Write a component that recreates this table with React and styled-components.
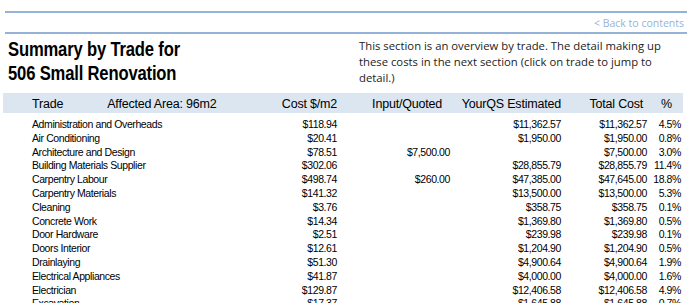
import React from "react"
import styled, { createGlobalStyle } from "styled-components"

const Global = createGlobalStyle`
  body {
    margin: 0;
    background: #fff;
    font-family: "Liberation Sans", Arial, sans-serif;
    color: #000;
  }
`

const Page = styled.div`
  width: 698px;
  height: 303px;
  overflow: hidden;
  padding-top: 11px;
  box-sizing: border-box;
`

const TopBar = styled.div`
  margin: 0 11px 0 5px;
  border-top: 2px solid #95b3d7;
  border-bottom: 2px solid #95b3d7;
  height: 19px;
  display: flex;
  align-items: center;
  justify-content: flex-end;
  padding-right: 3px;
`

const BackLink = styled.a`
  font-family: "Open Sans", "Liberation Sans", sans-serif;
  font-size: 10.5px;
  color: #95b3d7;
  text-decoration: none;
  cursor: pointer;
`

const Intro = styled.div`
  display: flex;
  padding: 3px 0 0 8px;
  height: 56px;
`

const Title = styled.h1`
  margin: 0;
  width: 351px;
  font-size: 20px;
  line-height: 24px;
  font-weight: bold;
  letter-spacing: -0.2px;
  transform: scaleX(0.83);
  transform-origin: left top;
  white-space: nowrap;
`

const Blurb = styled.p`
  margin: 1px 0 0;
  width: 315px;
  font-family: "Open Sans", "Liberation Sans", sans-serif;
  font-size: 11.3px;
  line-height: 16px;
  color: #222;
`

const Grid = styled.div`
  display: grid;
  grid-template-columns: 230px 75px 113px 111px 120px;
  padding-left: 32px;
`

const HeadRow = styled(Grid)`
  margin: 0 15px 0 3px;
  padding-left: 29px;
  background: #dce6f1;
  height: 20px;
  align-items: end;
  font-size: 12.5px;
  letter-spacing: -0.2px;
  line-height: 17px;
`

const HeadCell = styled.div`
  text-align: ${p => (p.$left ? "left" : "right")};
  padding-right: ${p => p.$pr || 0}px;
  white-space: nowrap;
  display: flex;
  justify-content: ${p => (p.$left ? "flex-start" : "flex-end")};
  gap: ${p => p.$gap || 0}px;
`

const Body = styled.div`
  padding-top: 5px;
  font-size: 10.5px;
  letter-spacing: -0.4px;
`

const Row = styled(Grid)`
  height: 13.8px;
  line-height: 13.8px;
`

const Cell = styled.div`
  text-align: ${p => (p.$left ? "left" : "right")};
  white-space: nowrap;
  cursor: ${p => (p.$left ? "pointer" : "default")};
`

const TotalCell = styled.div`
  display: flex;
  justify-content: flex-end;
  gap: 4px;
  white-space: nowrap;
`

const Pct = styled.span`
  min-width: 30px;
  text-align: right;
`

const rows = [
  ["Administration and Overheads", "$118.94", "", "$11,362.57", "$11,362.57", "4.5%"],
  ["Air Conditioning", "$20.41", "", "$1,950.00", "$1,950.00", "0.8%"],
  ["Architecture and Design", "$78.51", "$7,500.00", "", "$7,500.00", "3.0%"],
  ["Building Materials Supplier", "$302.06", "", "$28,855.79", "$28,855.79", "11.4%"],
  ["Carpentry Labour", "$498.74", "$260.00", "$47,385.00", "$47,645.00", "18.8%"],
  ["Carpentry Materials", "$141.32", "", "$13,500.00", "$13,500.00", "5.3%"],
  ["Cleaning", "$3.76", "", "$358.75", "$358.75", "0.1%"],
  ["Concrete Work", "$14.34", "", "$1,369.80", "$1,369.80", "0.5%"],
  ["Door Hardware", "$2.51", "", "$239.98", "$239.98", "0.1%"],
  ["Doors Interior", "$12.61", "", "$1,204.90", "$1,204.90", "0.5%"],
  ["Drainlaying", "$51.30", "", "$4,900.64", "$4,900.64", "1.9%"],
  ["Electrical Appliances", "$41.87", "", "$4,000.00", "$4,000.00", "1.6%"],
  ["Electrician", "$129.87", "", "$12,406.58", "$12,406.58", "4.9%"],
  ["Excavation", "$17.37", "", "$1,645.88", "$1,645.88", "0.7%"],
]

export default function App() {
  return (
    <Page>
      <Global />
      <TopBar>
        <BackLink>&lt; Back to contents</BackLink>
      </TopBar>
      <Intro>
        <Title>
          Summary by Trade for
          <br />
          506 Small Renovation
        </Title>
        <Blurb>
          This section is an overview by trade. The detail making up these costs in the next
          section (click on trade to jump to detail.)
        </Blurb>
      </Intro>
      <HeadRow>
        <HeadCell $left $gap={44}>
          <span>Trade</span>
          <span>Affected Area: 96m2</span>
        </HeadCell>
        <HeadCell>Cost $/m2</HeadCell>
        <HeadCell $pr={8}>Input/Quoted</HeadCell>
        <HeadCell>YourQS Estimated</HeadCell>
        <HeadCell $pr={9} $gap={18}>
          <span>Total Cost</span>
          <span>%</span>
        </HeadCell>
      </HeadRow>
      <Body>
        {rows.map(r => (
          <Row key={r[0]}>
            <Cell $left>{r[0]}</Cell>
            <Cell>{r[1]}</Cell>
            <Cell>{r[2]}</Cell>
            <Cell>{r[3]}</Cell>
            <TotalCell>
              <span>{r[4]}</span>
              <Pct>{r[5]}</Pct>
            </TotalCell>
          </Row>
        ))}
      </Body>
    </Page>
  )
}
